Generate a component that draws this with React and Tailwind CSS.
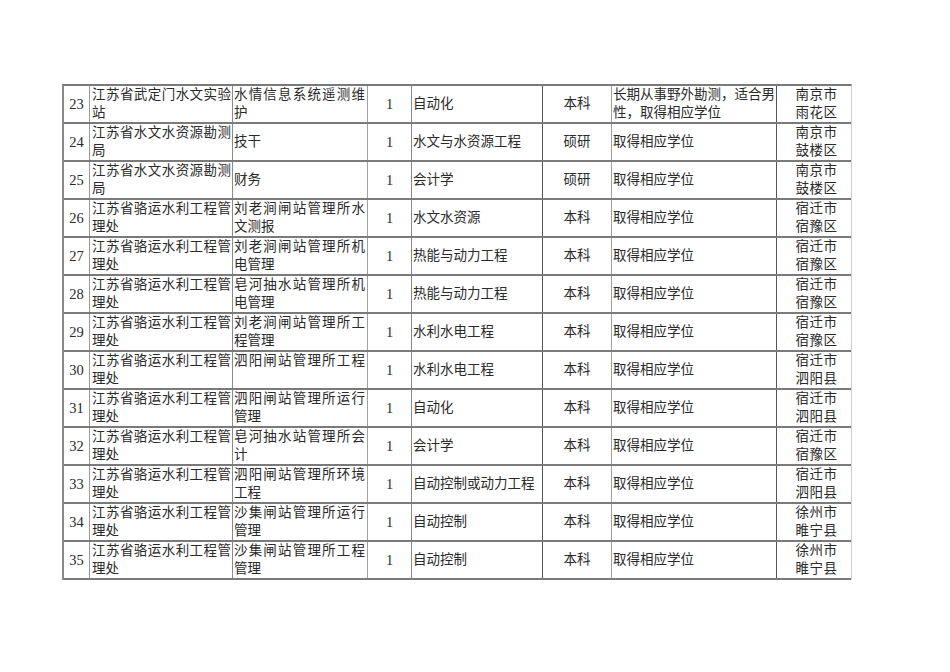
import React from 'react';

const rows = [
    ['23', ['江苏省武定门水文实验', '站'], ['水情信息系统遥测维', '护'], '自动化', '本科', ['长期从事野外勘测，适合男', '性，取得相应学位'], ['南京市', '雨花区']],
    ['24', ['江苏省水文水资源勘测', '局'], ['技干'], '水文与水资源工程', '硕研', ['取得相应学位'], ['南京市', '鼓楼区']],
    ['25', ['江苏省水文水资源勘测', '局'], ['财务'], '会计学', '硕研', ['取得相应学位'], ['南京市', '鼓楼区']],
    ['26', ['江苏省骆运水利工程管', '理处'], ['刘老涧闸站管理所水', '文测报'], '水文水资源', '本科', ['取得相应学位'], ['宿迁市', '宿豫区']],
    ['27', ['江苏省骆运水利工程管', '理处'], ['刘老涧闸站管理所机', '电管理'], '热能与动力工程', '本科', ['取得相应学位'], ['宿迁市', '宿豫区']],
    ['28', ['江苏省骆运水利工程管', '理处'], ['皂河抽水站管理所机', '电管理'], '热能与动力工程', '本科', ['取得相应学位'], ['宿迁市', '宿豫区']],
    ['29', ['江苏省骆运水利工程管', '理处'], ['刘老涧闸站管理所工', '程管理'], '水利水电工程', '本科', ['取得相应学位'], ['宿迁市', '宿豫区']],
    ['30', ['江苏省骆运水利工程管', '理处'], ['泗阳闸站管理所工程', '\u00a0'], '水利水电工程', '本科', ['取得相应学位'], ['宿迁市', '泗阳县']],
    ['31', ['江苏省骆运水利工程管', '理处'], ['泗阳闸站管理所运行', '管理'], '自动化', '本科', ['取得相应学位'], ['宿迁市', '泗阳县']],
    ['32', ['江苏省骆运水利工程管', '理处'], ['皂河抽水站管理所会', '计'], '会计学', '本科', ['取得相应学位'], ['宿迁市', '宿豫区']],
    ['33', ['江苏省骆运水利工程管', '理处'], ['泗阳闸站管理所环境', '工程'], '自动控制或动力工程', '本科', ['取得相应学位'], ['宿迁市', '泗阳县']],
    ['34', ['江苏省骆运水利工程管', '理处'], ['沙集闸站管理所运行', '管理'], '自动控制', '本科', ['取得相应学位'], ['徐州市', '睢宁县']],
    ['35', ['江苏省骆运水利工程管', '理处'], ['沙集闸站管理所工程', '管理'], '自动控制', '本科', ['取得相应学位'], ['徐州市', '睢宁县']],
];

// multi-line cell: first line stretched to the full width when wrapped
function Lines({ lines }) {
    return (
        <div className="flex flex-col w-full">
            {lines.map((l, i) => (
                <span
                    key={i}
                    className={lines.length > 1 && i === 0 ? 'block [text-align-last:justify] text-justify' : 'block'}
                >
                    {l}
                </span>
            ))}
        </div>
    );
}

export default function App() {
    return (
        <div
            className="min-h-screen bg-white pt-[84px] pl-[62px] text-[#2a2a2a] text-[13.5px] leading-[18px]"
            style={{ fontFamily: '"Liberation Serif", "Noto Sans CJK SC", serif' }}
        >
            <div className="w-[790px] border-t-2 border-l-2 border-r border-t-[#7a7a7a] border-l-[#8a8a8a] border-r-[#d0d0d0]">
                {rows.map((r) => (
                    <div
                        key={r[0]}
                        className="grid grid-cols-[26px_143px_135px_44px_131px_69px_165px_75px] h-[38px] border-b-2 border-[#7a7a7a]"
                    >
                        <div className="flex items-center justify-center border-r border-[#9a9a9a] text-[14.5px]">{r[0]}</div>
                        <div className="flex items-center pl-[2px] pr-[1px] border-r border-[#8a8a8a]">
                            <Lines lines={r[1]} />
                        </div>
                        <div className="flex items-center pl-[1px] pr-[2px] border-r border-[#a0a0a0]">
                            <Lines lines={r[2]} />
                        </div>
                        <div className="flex items-center justify-center border-r border-[#8a8a8a] text-[14.5px]">1</div>
                        <div className="flex items-center pl-[1px] border-r border-[#555]">{r[3]}</div>
                        <div className="flex items-center justify-center border-r border-[#a0a0a0]">{r[4]}</div>
                        <div className="flex items-center pl-[1px] pr-[1px] border-r border-[#555]">
                            <Lines lines={r[5]} />
                        </div>
                        <div className="flex flex-col items-center justify-center pl-[4px]">
                            {r[6].map((l) => (
                                <span key={l} className="block tracking-[0.5px]">{l}</span>
                            ))}
                        </div>
                    </div>
                ))}
            </div>
        </div>
    );
}
